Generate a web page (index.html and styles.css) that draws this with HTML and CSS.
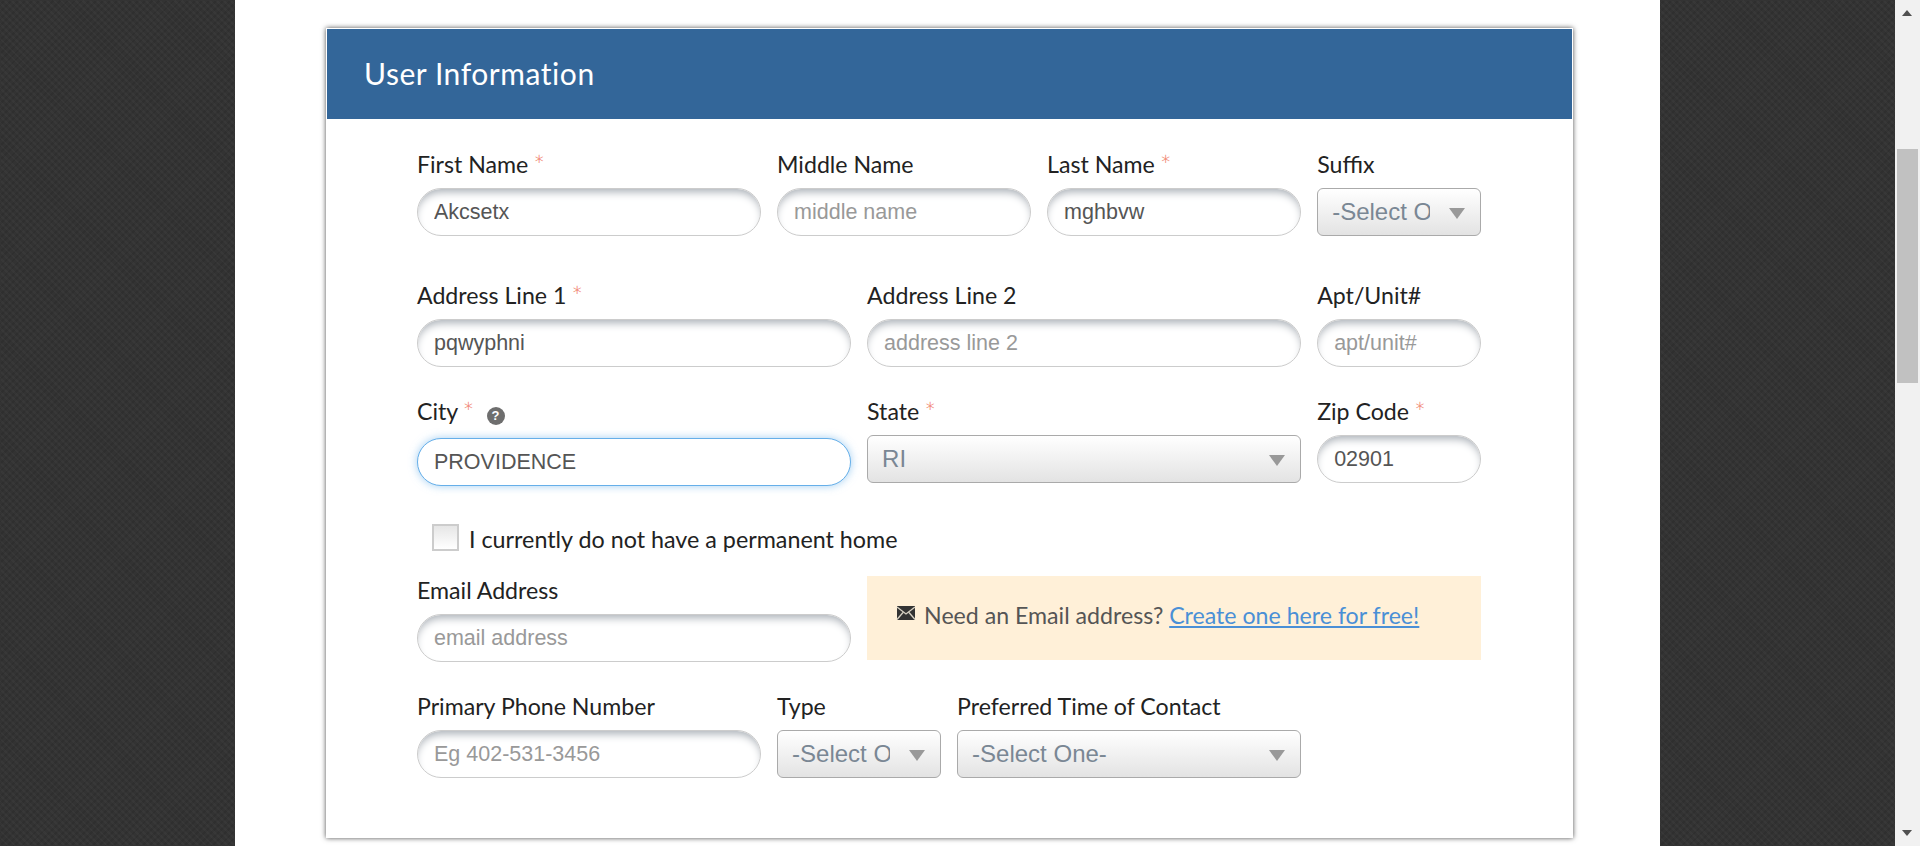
FILE: index.html
```html
<!DOCTYPE html>
<html>
<head lang="en">
    <meta charset="UTF-8">
    <title>User Information</title>
    <link rel="stylesheet" href="styles.css">
</head>
<body>
<div class="page">
    <div class="side"></div>
    <div class="main">
        <div class="card">
            <h2 class="card-title">User Information</h2>
            <form class="card-body">
                <div class="row">
                    <div class="field c4">
                        <label>First Name <span class="req">*</span></label>
                        <input type="text" value="Akcsetx">
                    </div>
                    <div class="field c3">
                        <label>Middle Name</label>
                        <input type="text" placeholder="middle name">
                    </div>
                    <div class="field c3">
                        <label>Last Name <span class="req">*</span></label>
                        <input type="text" value="mghbvw">
                    </div>
                    <div class="field c2">
                        <label>Suffix</label>
                        <div class="select"><select><option>-Select One-</option></select></div>
                    </div>
                </div>
                <div class="row row-address">
                    <div class="field c5">
                        <label>Address Line 1 <span class="req">*</span></label>
                        <input type="text" value="pqwyphni">
                    </div>
                    <div class="field c5">
                        <label>Address Line 2</label>
                        <input type="text" placeholder="address line 2">
                    </div>
                    <div class="field c2">
                        <label>Apt/Unit#</label>
                        <input type="text" placeholder="apt/unit#">
                    </div>
                </div>
                <div class="row row-city">
                    <div class="field c5">
                        <label class="label-help">City <span class="req">*</span><span class="help">?</span></label>
                        <input type="text" class="focus" value="PROVIDENCE">
                    </div>
                    <div class="field c5">
                        <label>State <span class="req">*</span></label>
                        <div class="select"><select><option>RI</option></select></div>
                    </div>
                    <div class="field c2">
                        <label>Zip Code <span class="req">*</span></label>
                        <input type="text" value="02901">
                    </div>
                </div>
                <div class="check-row">
                    <input type="checkbox">
                    <span>I currently do not have a permanent home</span>
                </div>
                <div class="row row-email">
                    <div class="field field-email c5">
                        <label>Email Address</label>
                        <input type="text" placeholder="email address">
                    </div>
                    <div class="note c7">
                        <svg class="mail" width="20" height="16" viewBox="0 0 20 16">
                            <rect x="1" y="1" width="18" height="14" fill="#333"/>
                            <path d="M1 2l9 7 9-7M1 14.500l6-7M19 14.500l-6-7" fill="none" stroke="#d8d2c4" stroke-width="1.300"/>
                        </svg>
                        <span>Need an Email address? <a href="#">Create one here for free!</a></span>
                    </div>
                </div>
                <div class="row row-phone">
                    <div class="field c4">
                        <label>Primary Phone Number</label>
                        <input type="text" placeholder="Eg 402-531-3456">
                    </div>
                    <div class="field c2">
                        <label>Type</label>
                        <div class="select"><select><option>-Select One-</option></select></div>
                    </div>
                    <div class="field c4">
                        <label>Preferred Time of Contact</label>
                        <div class="select"><select><option>-Select One-</option></select></div>
                    </div>
                </div>
            </form>
        </div>
    </div>
    <div class="side"></div>
    <div class="scrollbar">
        <span class="arrow-up"></span>
        <span class="thumb"></span>
        <span class="arrow-down"></span>
    </div>
</div>
</body>
</html>
```

FILE: styles.css
```css
*{
    margin: 0;
    padding: 0;
    box-sizing: border-box;
}
body{
    font-family: Lato, "Liberation Sans", sans-serif;
    color: #222;
    overflow: hidden;
}
.page{
    display: flex;
    height: 846px;
    overflow: hidden;
}
.side{
    width: 235px;
    flex: none;
    background-color: #333;
    background-image:
        repeating-linear-gradient(45deg, rgba(255,255,255,.025) 0 2px, transparent 2px 5px),
        repeating-linear-gradient(-45deg, rgba(0,0,0,.08) 0 2px, transparent 2px 5px);
}
.main{
    flex: 1;
    background: #fff;
    padding: 28px 87px 0 91px;
}
.card{
    height: 810px;
    border: 1px solid #fff;
    box-shadow: 0 0 5px rgba(0,0,0,.7);
}
.card-title{
    height: 90px;
    background: #336699;
    color: #fff;
    font-size: 30px;
    font-weight: 400;
    line-height: 88px;
    padding-left: 37px;
    letter-spacing: .55px;
}
.card-body{
    padding: 33px 90.8px 0 90px;
}
.row{
    display: grid;
    grid-template-columns: repeat(12, 1fr);
    column-gap: 16px;
}
.row-address{
    margin-top: 47px;
}
.row-city{
    margin-top: 32px;
}
.row-email{
    margin-top: 25px;
}
.row-phone{
    margin-top: 32px;
}
.c2{ grid-column: span 2; }
.c3{ grid-column: span 3; }
.c4{ grid-column: span 4; }
.c5{ grid-column: span 5; }
.c7{ grid-column: span 7; }
.field label{
    display: block;
    height: 36px;
    font-size: 23.15px;
    line-height: 24px;
}
.field .label-help{
    height: 39px;
}
.field-email{
    padding-top: 2px;
}
.req{
    color: #f0806c;
    font-size: 28px;
    font-weight: 300;
    line-height: 0;
    margin-left: -1px;
    vertical-align: -2px;
}
.help{
    display: inline-block;
    width: 18px;
    height: 18px;
    margin-left: 12px;
    border-radius: 50%;
    background: #6e6e6e;
    color: #fff;
    font-family: "Liberation Sans", sans-serif;
    font-size: 13px;
    font-weight: 700;
    line-height: 18px;
    text-align: center;
    vertical-align: 0;
}
input[type=text]{
    display: block;
    width: 100%;
    height: 48px;
    padding: 0 16px;
    border: 1px solid #ccc;
    border-radius: 24px;
    background: #fff;
    box-shadow: inset 0 6px 8px -3px #aab0b7;
    color: #555;
    font-family: "Liberation Sans", sans-serif;
    font-size: 21.5px;
    outline: none;
}
input[type=text]::placeholder{
    color: #999;
    opacity: 1;
}
input.focus[type=text]{
    border-color: #66afe9;
    box-shadow: 0 0 8px rgba(102,175,233,.6);
}
.select{
    position: relative;
}
.select select{
    display: block;
    width: 100%;
    height: 48px;
    padding: 0 50px 2px 14px;
    border: 1px solid #aaa;
    border-radius: 6px;
    background: linear-gradient(#fff, #e3e3e3);
    color: #7a8794;
    font-family: "Liberation Sans", sans-serif;
    font-size: 24px;
    appearance: none;
    outline: none;
}
.select::after{
    content: "";
    position: absolute;
    right: 16px;
    top: 20px;
    border-left: 8.5px solid transparent;
    border-right: 8.5px solid transparent;
    border-top: 11px solid #999;
}
.check-row{
    display: flex;
    align-items: center;
    gap: 10px;
    margin: 38px 0 0 15px;
    height: 27px;
    font-size: 23.3px;
}
.check-row span{
    padding-top: 2px;
}
.check-row input{
    width: 27px;
    height: 27px;
    appearance: none;
    border: 2px solid #ccc;
    background: linear-gradient(#e6e6e6, #fff);
}
.note{
    display: flex;
    align-items: center;
    gap: 8px;
    height: 84px;
    padding: 0 0 7px 29px;
    background: #fff0d8;
    color: #555;
    font-size: 23.15px;
}
.note .mail{
    flex: none;
    margin-top: -3px;
}
.note a{
    color: #4a8fd6;
}
.scrollbar{
    width: 25px;
    flex: none;
    background: #f1f1f1;
    display: flex;
    flex-direction: column;
}
.arrow-up{
    width: 0;
    margin: 10px 0 0 7px;
    border-left: 5.5px solid transparent;
    border-right: 5.5px solid transparent;
    border-bottom: 6px solid #505050;
}
.thumb{
    width: 21px;
    height: 234px;
    margin: 133px 0 0 2px;
    background: #c1c1c1;
}
.arrow-down{
    width: 0;
    margin: auto 0 10px 7px;
    border-left: 5.5px solid transparent;
    border-right: 5.5px solid transparent;
    border-top: 6px solid #505050;
}
```
